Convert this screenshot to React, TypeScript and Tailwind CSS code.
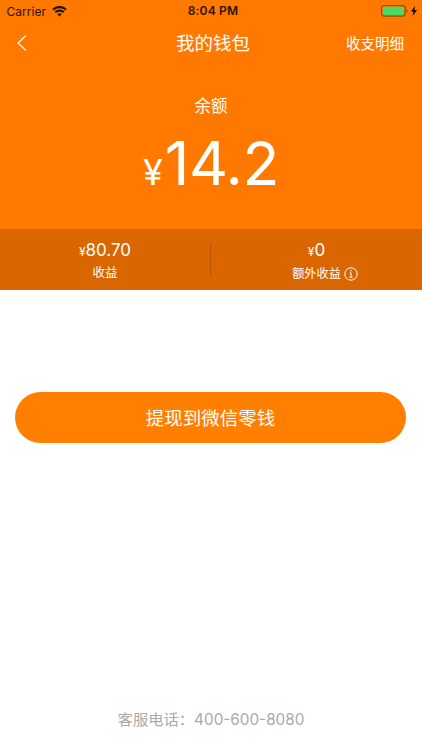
import React from 'react';

const cjk = "font-['Inter','Noto_Sans_CJK_SC',sans-serif]";

function StatusBar() {
  return (
    <div className="relative flex h-[22px] items-center justify-between pl-[6.5px] pr-[5px] text-[12px] text-[#2b1400]">
      <div className="flex items-center gap-[6px]">
        <span className="pt-px tracking-[0.02px]">Carrier</span>
        <svg width="15" height="11" viewBox="0 0 15 11" fill="none" stroke="currentColor" strokeWidth="2.3">
          <path d="M1 3.7a9.2 9.2 0 0 1 13 0M3.3 6.3a6 6 0 0 1 8.4 0" />
          <path d="M7.5 10.5L5.3 8.3a3.1 3.1 0 0 1 4.4 0z" fill="currentColor" stroke="none" />
        </svg>
      </div>
      <span className="absolute inset-x-0 pl-[4px] text-center text-[12px] font-semibold tracking-[0.2px]">8:04 PM</span>
      <div className="flex items-center gap-[3px]">
        <svg width="27" height="12" viewBox="0 0 27 12">
          <rect x="0.6" y="0.6" width="23.5" height="10.5" rx="2.5" fill="none" stroke="#a04b00" strokeWidth="1.2" />
          <rect x="1.8" y="1.8" width="21" height="8.2" rx="1.2" fill="#4cd964" />
          <path d="M25.2 4v4q1.5-.5 1.5-2T25.2 4" fill="#a04b00" />
        </svg>
        <svg width="6" height="10" viewBox="0 0 6 10"><path d="M4 0L0 5.6h2.5L1.6 10 6 4H3.4z" /></svg>
      </div>
    </div>
  );
}

export default function App() {
  return (
    <main className={`flex h-[750px] w-[422px] flex-col bg-white text-white ${cjk}`}>
      <section className="h-[229px] bg-[#ff7800]">
        <StatusBar />
        <header className="relative flex h-[42px] items-center justify-between px-[17px]">
          <svg width="10" height="16" viewBox="0 0 10 16" fill="none" stroke="white" strokeWidth="1.1"><path d="M9 .5L1 8l8 7.5" /></svg>
          <h1 className="absolute inset-x-0 pl-[4px] pt-[2px] text-center text-[18.5px]">我的钱包</h1>
          <span className="pr-px pt-[2px] text-[14.5px]">收支明细</span>
        </header>
        <div className="flex flex-col items-center pt-[30px]">
          <span className="text-[16.5px] leading-[24px]">余额</span>
          <div className="mt-[15px] flex items-baseline gap-[2px] leading-[60px]">
            <span className="text-[36px]">¥</span><span className="text-[60.5px] tracking-[-0.4px]">14.2</span>
          </div>
        </div>
      </section>
      <section className="flex h-[61px] items-center bg-[#d96600]">
        <div className="flex w-[210px] flex-col items-center pt-[2px] leading-[22px]">
          <div className="relative top-px"><span className="text-[12px]">¥</span><span className="text-[17px]">80.70</span></div>
          <span className="text-[12.5px]">收益</span>
        </div>
        <div className="h-[32px] w-px bg-[#b85600]" />
        <div className="flex flex-1 flex-col items-center pt-[3px] leading-[22px]">
          <div className="relative top-px"><span className="text-[12px]">¥</span><span className="text-[17px]">0</span></div>
          <div className="relative pt-px text-[12.2px]">
            额外收益
            <svg className="absolute left-full top-[5px] ml-[3px]" width="14" height="14" viewBox="0 0 14 14" fill="none" stroke="white"><circle cx="7" cy="7" r="6.2" /><path d="M5.7 5.8H7v4.4M5.4 10.3h3.2M7 3v1.4" /></svg>
          </div>
        </div>
      </section>
      <button className="ml-[15px] mr-[16px] mt-[102px] h-[51px] rounded-full bg-[#ff8000] pt-[2px] text-[18.5px]">提现到微信零钱</button>
      <footer className="mt-auto pb-[17px] text-center text-[15.3px] leading-[26px] text-[#aaa]">客服电话：400-600-8080</footer>
    </main>
  );
}
